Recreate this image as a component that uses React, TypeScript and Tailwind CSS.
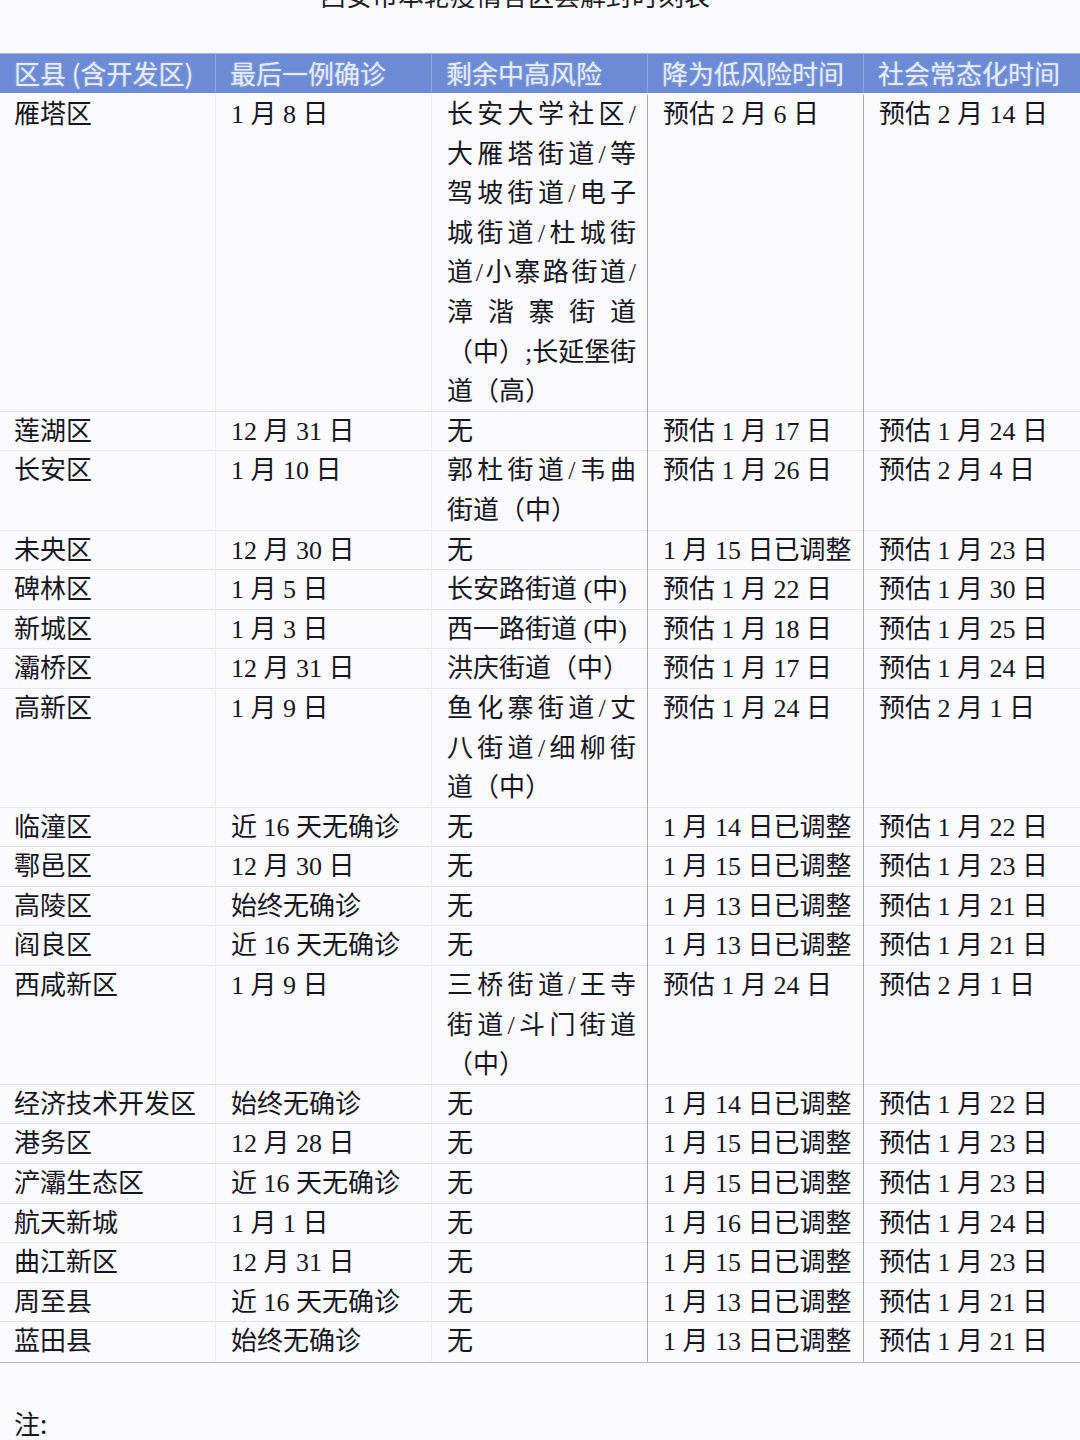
import React from "react";

type Row = [string, string, string[], string, string];

const rows: Row[] = [
  ["雁塔区", "1 月 8 日", ["长安大学社区/", "大雁塔街道/等", "驾坡街道/电子", "城街道/杜城街", "道/小寨路街道/", "漳湝寨街道", "（中）;长延堡街", "道（高）"], "预估 2 月 6 日", "预估 2 月 14 日"],
  ["莲湖区", "12 月 31 日", ["无"], "预估 1 月 17 日", "预估 1 月 24 日"],
  ["长安区", "1 月 10 日", ["郭杜街道/韦曲", "街道（中）"], "预估 1 月 26 日", "预估 2 月 4 日"],
  ["未央区", "12 月 30 日", ["无"], "1 月 15 日已调整", "预估 1 月 23 日"],
  ["碑林区", "1 月 5 日", ["长安路街道 (中)"], "预估 1 月 22 日", "预估 1 月 30 日"],
  ["新城区", "1 月 3 日", ["西一路街道 (中)"], "预估 1 月 18 日", "预估 1 月 25 日"],
  ["灞桥区", "12 月 31 日", ["洪庆街道（中）"], "预估 1 月 17 日", "预估 1 月 24 日"],
  ["高新区", "1 月 9 日", ["鱼化寨街道/丈", "八街道/细柳街", "道（中）"], "预估 1 月 24 日", "预估 2 月 1 日"],
  ["临潼区", "近 16 天无确诊", ["无"], "1 月 14 日已调整", "预估 1 月 22 日"],
  ["鄠邑区", "12 月 30 日", ["无"], "1 月 15 日已调整", "预估 1 月 23 日"],
  ["高陵区", "始终无确诊", ["无"], "1 月 13 日已调整", "预估 1 月 21 日"],
  ["阎良区", "近 16 天无确诊", ["无"], "1 月 13 日已调整", "预估 1 月 21 日"],
  ["西咸新区", "1 月 9 日", ["三桥街道/王寺", "街道/斗门街道", "（中）"], "预估 1 月 24 日", "预估 2 月 1 日"],
  ["经济技术开发区", "始终无确诊", ["无"], "1 月 14 日已调整", "预估 1 月 22 日"],
  ["港务区", "12 月 28 日", ["无"], "1 月 15 日已调整", "预估 1 月 23 日"],
  ["浐灞生态区", "近 16 天无确诊", ["无"], "1 月 15 日已调整", "预估 1 月 23 日"],
  ["航天新城", "1 月 1 日", ["无"], "1 月 16 日已调整", "预估 1 月 24 日"],
  ["曲江新区", "12 月 31 日", ["无"], "1 月 15 日已调整", "预估 1 月 23 日"],
  ["周至县", "近 16 天无确诊", ["无"], "1 月 13 日已调整", "预估 1 月 21 日"],
  ["蓝田县", "始终无确诊", ["无"], "1 月 13 日已调整", "预估 1 月 21 日"],
];

const headers = ["区县 (含开发区)", "最后一例确诊", "剩余中高风险", "降为低风险时间", "社会常态化时间"];

export default function App() {
  return (
    <div className="w-[1080px] h-[1440px] overflow-hidden bg-[#fbfbfd] text-[#16161f] [font-family:'Liberation_Serif','Noto_Sans_CJK_SC',serif]">
      {/* cut-off title */}
      <div className="h-[8px] overflow-hidden">
        <div className="-mt-[18px] ml-[320px] text-[26px] leading-[26px] text-[#1e1e26] [font-family:'Noto_Sans_CJK_SC',sans-serif]">
          西安市本轮疫情各区县解封时刻表
        </div>
      </div>

      {/* header */}
      <div className="mt-[45px] grid grid-cols-[216px_216px_216px_216px_216px] h-[40px] bg-[#6d8bd4] shadow-[inset_0_1px_0_#9fb2e2]">
        {headers.map((h, i) => (
          <div
            key={h}
            className={`pl-[14px] text-[26px] leading-[40px] whitespace-nowrap text-[#e4ecf9] [font-family:'Noto_Sans_CJK_SC',sans-serif] [text-shadow:0_0_2px_#a9bde8] ${i < 4 ? "shadow-[inset_-1px_0_0_#8ba3de]" : ""}`}
          >
            {h}
          </div>
        ))}
      </div>

      {/* body */}
      <div className="pt-[2px] border-b border-[#b4b6bc]">
        {rows.map((r, ri) => (
          <div
            key={r[0]}
            className={`grid grid-cols-[216px_216px_216px_216px_216px] text-[26px] leading-[39.6px] ${ri < rows.length - 1 ? "shadow-[inset_0_-1px_0_#e3e5eb]" : ""}`}
          >
            <div className="pl-[14px] whitespace-nowrap shadow-[inset_-1px_0_0_#eceef3]">{r[0]}</div>
            <div className="pl-[15px] whitespace-nowrap shadow-[inset_-1px_0_0_#eceef3]">{r[1]}</div>
            <div className="pl-[15px] pr-[12px] shadow-[inset_-1px_0_0_#a9abb2]">
              {r[2].map((line, li) => {
                const justify = r[2].length > 1 && li < r[2].length - 1;
                return (
                  <div
                    key={li}
                    className={`whitespace-nowrap ${justify ? "text-justify [text-align-last:justify]" : ""}`}
                  >
                    {line}
                  </div>
                );
              })}
            </div>
            <div className="pl-[15px] whitespace-nowrap shadow-[inset_-1px_0_0_#a9abb2]">{r[3]}</div>
            <div className="pl-[15px] whitespace-nowrap">{r[4]}</div>
          </div>
        ))}
      </div>

      <div className="mt-[40px] pl-[14px] text-[26px] leading-[39.6px] [font-family:'Noto_Sans_CJK_SC',sans-serif]">注:</div>
    </div>
  );
}
